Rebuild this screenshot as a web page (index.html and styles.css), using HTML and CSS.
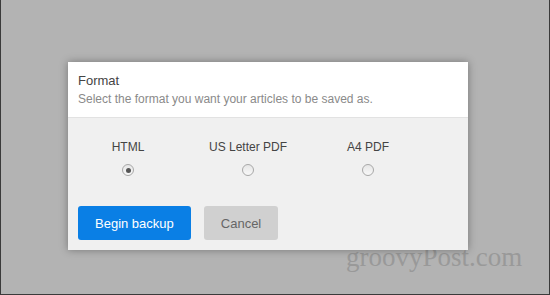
FILE: index.html
```html
<!DOCTYPE html>
<html lang="en">
<head>
    <meta charset="UTF-8">
    <title>Format</title>
    <link rel="stylesheet" href="styles.css">
</head>
<body>
    <div class="screen">
        <div class="dialog">
            <header class="dialog-header">
                <h1>Format</h1>
                <p>Select the format you want your articles to be saved as.</p>
            </header>
            <div class="dialog-body">
                <div class="options">
                    <label class="option">
                        <span class="option-label">HTML</span>
                        <span class="radio checked"></span>
                    </label>
                    <label class="option">
                        <span class="option-label">US Letter PDF</span>
                        <span class="radio"></span>
                    </label>
                    <label class="option">
                        <span class="option-label">A4 PDF</span>
                        <span class="radio"></span>
                    </label>
                </div>
                <div class="actions">
                    <button class="btn btn-primary">Begin backup</button>
                    <button class="btn btn-cancel">Cancel</button>
                </div>
            </div>
        </div>
        <div class="watermark">groovyPost.com</div>
    </div>
</body>
</html>
```

FILE: styles.css
```css
/* Page */
html, body {
    margin: 0;
    padding: 0;
}

body {
    font-family: 'Liberation Sans', Arial, sans-serif;
    background: #b3b3b3;
}

.screen {
    position: relative;
    width: 548px;
    height: 294px;
    border-left: 1px solid #3a3a3a;
    border-right: 1px solid #3a3a3a;
    border-bottom: 1px solid #3a3a3a;
    overflow: hidden;
}

/* Dialog */
.dialog {
    position: relative;
    z-index: 1;
    width: 400px;
    margin: 62px 0 0 67px;
    background: #f0f0f0;
    box-shadow: 0 0 8px rgba(0, 0, 0, 0.35);
}

.dialog-header {
    background: #fff;
    padding: 11px 10px 10px;
    border-bottom: 1px solid #e2e2e2;
}

.dialog-header h1 {
    margin: 0;
    font-size: 13px;
    font-weight: normal;
    line-height: 16px;
    color: #444;
}

.dialog-header p {
    margin: 2px 0 0;
    font-size: 12px;
    line-height: 16px;
    color: #8a8a8a;
}

.dialog-body {
    padding: 21px 10px 10px;
}

/* Radio options */
.options {
    display: flex;
    margin-left: -10px;
}

.option {
    width: 120px;
    display: flex;
    flex-direction: column;
    align-items: center;
    gap: 9px;
}

.option-label {
    font-size: 12px;
    line-height: 16px;
    color: #444;
}

.radio {
    width: 10px;
    height: 10px;
    border: 1px solid #a8a8a8;
    border-radius: 50%;
    background: linear-gradient(#e6e6e6, #f8f8f8);
    display: flex;
    justify-content: center;
    align-items: center;
}

.radio.checked::after {
    content: '';
    width: 5px;
    height: 5px;
    border-radius: 50%;
    background: #555;
}

/* Buttons */
.actions {
    display: flex;
    gap: 13px;
    margin-top: 30px;
}

.btn {
    height: 34px;
    padding: 0 17px;
    border: none;
    border-radius: 3px;
    font-family: inherit;
    font-size: 13px;
}

.btn-primary {
    background: #0a7fe5;
    color: #fff;
}

.btn-cancel {
    background: #d0d0d0;
    color: #666;
}

/* Watermark */
.watermark {
    position: absolute;
    left: 345px;
    top: 242px;
    font-family: 'Liberation Serif', 'Times New Roman', serif;
    font-size: 27px;
    color: #999;
}
```
